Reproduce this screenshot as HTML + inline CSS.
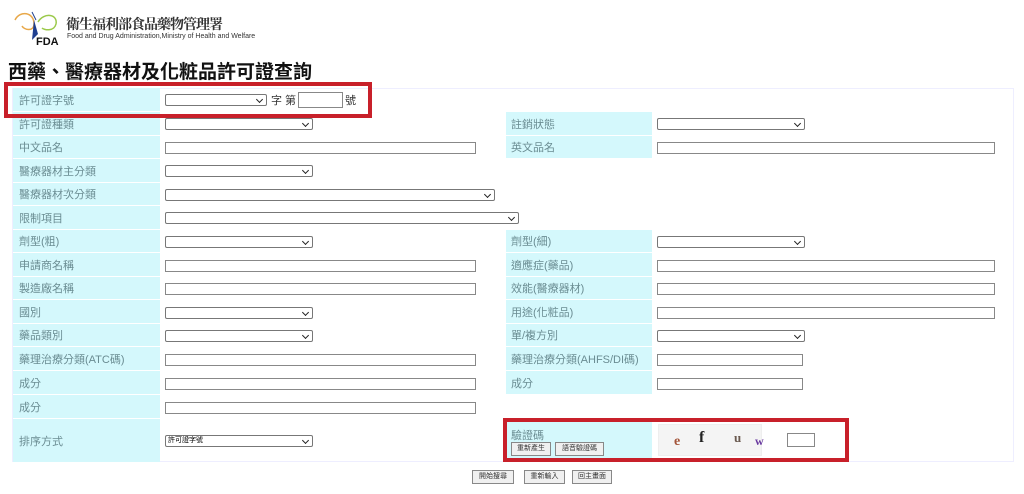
<!DOCTYPE html>
<html><head><meta charset="utf-8"><style>
body{margin:0;width:1024px;height:494px;background:#fff;position:relative;overflow:hidden;font-family:"Liberation Sans","Noto Sans CJK TC",sans-serif;}
div,span{position:absolute;box-sizing:border-box;}
.l{left:13px;width:147px;background:#d4f8fc;color:#6a8c92;font-size:11px;padding-left:6px;display:flex;align-items:center;}
.l2{left:506px;width:146px;background:#d4f8fc;color:#6a8c92;font-size:11px;padding-left:5px;display:flex;align-items:center;}
.s{height:12px;border:1px solid #777;border-radius:2px;background:#fff;}
.s:after{content:"";position:absolute;right:4px;top:2px;width:4px;height:4px;border-right:1.3px solid #222;border-bottom:1.3px solid #222;transform:rotate(45deg);}
.i{height:12px;border:1px solid #888;background:#fff;}
.rb{border:4px solid #c8202a;}
.b{height:14px;border:1px solid #888;background:#f0f0f0;font-size:7px;color:#333;text-align:center;line-height:12px;}
</style></head><body>
<!-- logo -->
<svg style="position:absolute;left:12px;top:8px" width="52" height="38" viewBox="0 0 52 38">
<path d="M3 12 C8 2 22 4 22 16 C22 24 12 22 10 18" fill="none" stroke="#e8a84a" stroke-width="1.5"/>
<path d="M26 14 C32 4 46 6 44 16 C42 24 32 22 30 20" fill="none" stroke="#9bc94a" stroke-width="1.5"/>
<path d="M22 12 L26 26 L20 32 Z" fill="#1f3f8f"/>
<path d="M20 4 L24 12" stroke="#1f3f8f" stroke-width="1"/>
<text x="24" y="37" font-size="11" font-weight="bold" fill="#111" font-family="Liberation Sans">FDA</text>
</svg>
<span style="left:66px;top:14px;font-size:14px;font-weight:bold;color:#333;letter-spacing:-1px;font-family:'Noto Serif CJK SC',serif">衛生福利部食品藥物管理署</span>
<span style="left:67px;top:33px;font-size:7px;color:#333">Food and Drug Administration,Ministry of Health and Welfare</span>
<span style="left:8px;top:57px;font-size:19px;font-weight:bold;color:#111">西藥、醫療器材及化粧品許可證查詢</span>

<div style="left:12px;top:88px;width:1002px;height:374px;border:1px solid #eef;"></div>

<div class="l" style="top:88px;height:23px">許可證字號</div>
<div class="s" style="left:165px;top:94px;width:102px"></div>
<span style="left:271px;top:92px;font-size:11px;color:#333">字 第</span>
<div class="i" style="left:298px;top:92px;width:45px;height:16px"></div>
<span style="left:345px;top:92px;font-size:11px;color:#333">號</span>

<div class="l" style="top:112px;height:23px">許可證種類</div>
<div class="s" style="left:165px;top:118px;width:148px"></div>
<div class="l2" style="top:112px;height:23px">註銷狀態</div>
<div class="s" style="left:657px;top:118px;width:148px"></div>

<div class="l" style="top:136px;height:22px">中文品名</div>
<div class="i" style="left:165px;top:142px;width:311px"></div>
<div class="l2" style="top:136px;height:22px">英文品名</div>
<div class="i" style="left:657px;top:142px;width:338px"></div>

<div class="l" style="top:159px;height:23px">醫療器材主分類</div>
<div class="s" style="left:165px;top:165px;width:148px"></div>

<div class="l" style="top:183px;height:22px">醫療器材次分類</div>
<div class="s" style="left:165px;top:189px;width:330px"></div>

<div class="l" style="top:206px;height:23px">限制項目</div>
<div class="s" style="left:165px;top:212px;width:354px"></div>

<div class="l" style="top:230px;height:22px">劑型(粗)</div>
<div class="s" style="left:165px;top:236px;width:148px"></div>
<div class="l2" style="top:230px;height:22px">劑型(細)</div>
<div class="s" style="left:657px;top:236px;width:148px"></div>

<div class="l" style="top:253px;height:23px">申請商名稱</div>
<div class="i" style="left:165px;top:260px;width:311px"></div>
<div class="l2" style="top:253px;height:23px">適應症(藥品)</div>
<div class="i" style="left:657px;top:260px;width:338px"></div>

<div class="l" style="top:277px;height:22px">製造廠名稱</div>
<div class="i" style="left:165px;top:283px;width:311px"></div>
<div class="l2" style="top:277px;height:22px">效能(醫療器材)</div>
<div class="i" style="left:657px;top:283px;width:338px"></div>

<div class="l" style="top:300px;height:23px">國別</div>
<div class="s" style="left:165px;top:307px;width:148px"></div>
<div class="l2" style="top:300px;height:23px">用途(化粧品)</div>
<div class="i" style="left:657px;top:307px;width:338px"></div>

<div class="l" style="top:324px;height:22px">藥品類別</div>
<div class="s" style="left:165px;top:330px;width:148px"></div>
<div class="l2" style="top:324px;height:22px">單/複方別</div>
<div class="s" style="left:657px;top:330px;width:148px"></div>

<div class="l" style="top:347px;height:23px">藥理治療分類(ATC碼)</div>
<div class="i" style="left:165px;top:354px;width:311px"></div>
<div class="l2" style="top:347px;height:23px">藥理治療分類(AHFS/DI碼)</div>
<div class="i" style="left:657px;top:354px;width:146px"></div>

<div class="l" style="top:371px;height:23px">成分</div>
<div class="i" style="left:165px;top:378px;width:311px"></div>
<div class="l2" style="top:371px;height:23px">成分</div>
<div class="i" style="left:657px;top:378px;width:146px"></div>

<div class="l" style="top:395px;height:23px">成分</div>
<div class="i" style="left:165px;top:402px;width:311px"></div>

<div class="l" style="top:419px;height:43px">排序方式</div>
<div class="s" style="left:165px;top:435px;width:148px;font-size:7px;padding-left:2px;line-height:10px">許可證字號</div>
<div class="l2" style="top:421px;height:38px;align-items:flex-start;padding-top:6px">驗證碼</div>
<div class="b" style="left:511px;top:442px;width:40px">重新產生</div>
<div class="b" style="left:555px;top:442px;width:49px">語音驗證碼</div>
<div style="left:658px;top:424px;width:104px;height:32px;background:#f4f4f4;border:1px solid #eee;font-family:'Liberation Serif',serif;font-weight:bold">
<span style="left:15px;top:9px;font-size:14px;color:#a4553a">e</span>
<span style="left:40px;top:4px;font-size:16px;color:#222">f</span>
<span style="left:75px;top:5px;font-size:13px;color:#6a5a50">u</span>
<span style="left:96px;top:9px;font-size:12px;color:#6a3aa0">w</span>
</div>
<div class="i" style="left:787px;top:433px;width:28px;height:14px"></div>

<div class="rb" style="left:4px;top:82px;width:368px;height:36px"></div>
<div class="rb" style="left:503px;top:418px;width:346px;height:44px"></div>

<div class="b" style="left:472px;top:470px;width:42px">開始搜尋</div>
<div class="b" style="left:524px;top:470px;width:41px">重新輸入</div>
<div class="b" style="left:572px;top:470px;width:40px">回主畫面</div>
</body></html>
